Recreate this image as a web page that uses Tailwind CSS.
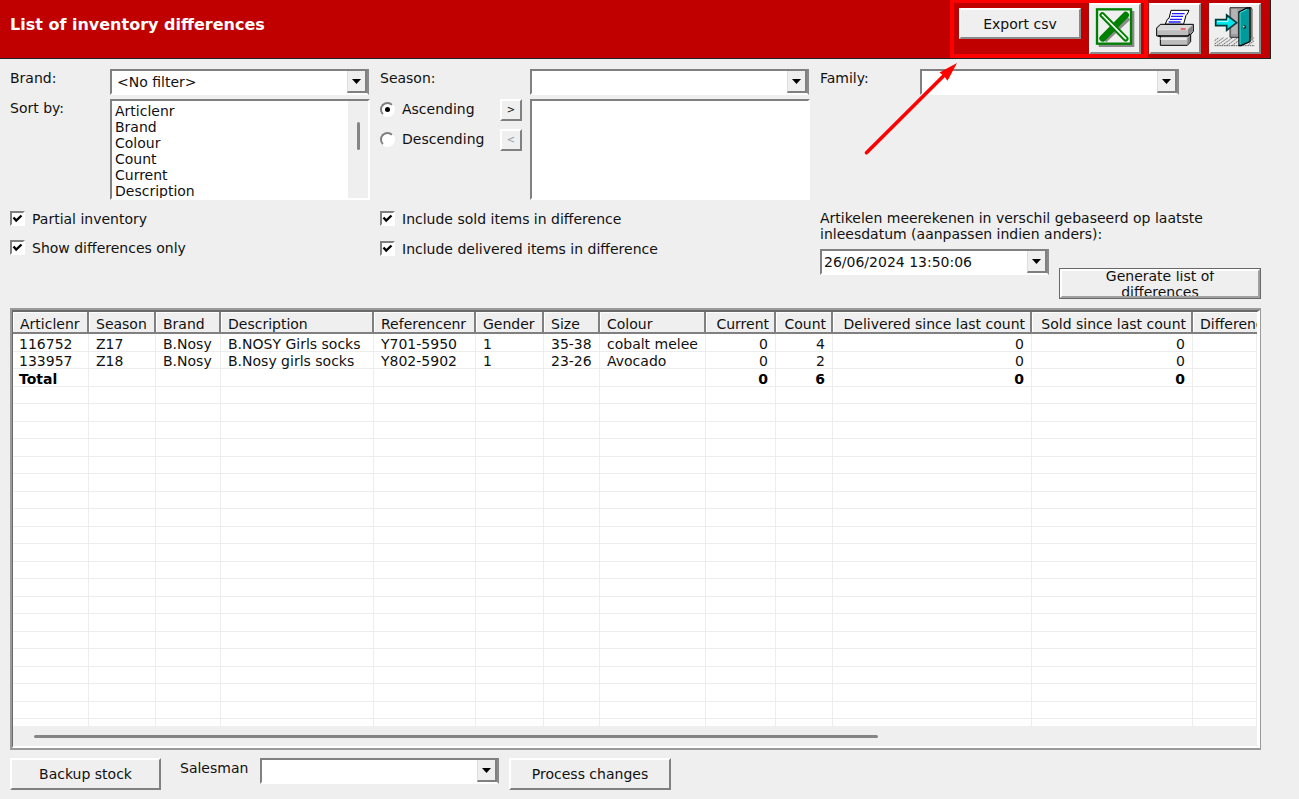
<!DOCTYPE html>
<html lang="en">
<head>
  <meta charset="UTF-8" />
  <meta name="viewport" content="width=device-width, initial-scale=1.0"/>
  <title>List of inventory differences</title>
  <script src="https://cdn.jsdelivr.net/npm/@tailwindcss/browser@4"></script>
</head>
<body class="min-h-screen overflow-x-hidden bg-[#efefef] font-['DejaVu_Sans',Verdana,sans-serif] text-[14px] leading-4 text-[#111]">

  <!-- Title bar -->
  <header class="mr-7 flex h-[59px] items-start border-r border-b border-[#222] bg-[#c00000] pr-[9px]">
    <h1 class="flex-1 pt-[17px] pl-[10px] text-[16px] leading-4 font-bold text-white">List of inventory differences</h1>

    <div class="relative mr-px flex items-start gap-2 border-4 border-t-3 border-[#ff0000] pr-[3px] pl-[5px]">
      <button type="button" class="mt-[5px] h-[31px] w-[122px] border-2 border-t-white border-l-white border-r-[#8a8a8a] border-b-[#8a8a8a] bg-[#efefef]">Export csv</button>
      <button type="button" aria-label="Export to Excel" class="h-[51px] w-[52px] border-2 border-t-white border-l-white border-r-[#8a8a8a] border-b-[#8a8a8a] bg-[#efefef]">
        <svg class="block h-[47px] w-12" viewBox="33 15 144 141">
          <path d="M56 33H163V141H56Z" fill="#8a8a8a"/>
          <rect x="51" y="28" width="102" height="103" fill="#efefef" stroke="#008000" stroke-width="7"/>
          <path d="M74 122L146 54" stroke="#8a8a8a" stroke-width="14"/>
          <path d="M68 115L137 45" stroke="#008000" stroke-width="20" stroke-linecap="round"/>
          <path d="M67 45L137 116" stroke="#008000" stroke-width="17" stroke-linecap="round"/>
          <path d="M67 45L137 116" stroke="#fff" stroke-width="5" stroke-linecap="round"/>
        </svg>
      </button>
      <!-- Pointer to the export buttons -->
      <svg class="pointer-events-none absolute top-[57px] -left-[94px] z-10 h-[100px] w-[104px]" viewBox="860 60 104 100">
        <path d="M866.5 152.7L945 74.5" stroke="#f00" stroke-width="3.6" stroke-linecap="round"/>
        <path d="M957 63L939.5 72.5L944 76L947.5 80.8Z" fill="#f00"/>
      </svg>
    </div>

    <div class="flex gap-2 pt-[3px]">
      <button type="button" aria-label="Print" class="h-[51px] w-[52px] border-2 border-t-white border-l-white border-r-[#8a8a8a] border-b-[#8a8a8a] bg-[#efefef]">
        <svg class="block h-[47px] w-12" viewBox="3 15 144 141">
          <path d="M31 73L20 84V108H31V136H112L122 125V104L130 94V73Z" fill="#bdbdbd" stroke="#000" stroke-width="3"/>
          <path d="M32 75H127L114 87H22Z" fill="#d8d8d8"/>
          <path d="M114 88L128 76V92L115 106Z" fill="#858585"/>
          <path d="M22 89H113" stroke="#f8f8f8" stroke-width="2"/>
          <path d="M24 108H114L121 101" fill="none" stroke="#000" stroke-width="4"/>
          <path d="M32 113H110V120H32Z" fill="#e8e8e8"/>
          <path d="M112 134V116L120 108V124Z" fill="#858585"/>
          <path d="M63 31H117L112 42L108 46L101 72H46L52 58L57 55Z" fill="#fff" stroke="#000" stroke-width="3"/>
          <path d="M66 41H104M63 49H99M60 58H96M56 66H92" stroke="#2020ff" stroke-width="4"/>
          <path d="M92 87H107" stroke="#f03030" stroke-width="4"/>
        </svg>
      </button>
      <button type="button" aria-label="Exit" class="h-[51px] w-[52px] border-2 border-t-white border-l-white border-r-[#8a8a8a] border-b-[#8a8a8a] bg-[#efefef]">
        <svg class="block h-[47px] w-12" viewBox="183 15 144 141">
          <path d="M194 113H313V137H194Z" fill="#e8e8e8"/>
          <path d="M194 122L206 113M194 132L220 113M200 137L234 113M215 137L248 113M230 137L262 114M246 137L272 117M296 124L312 113M296 134L313 122M194 137H314" stroke="#666" stroke-width="3" stroke-dasharray="5 2"/>
          <path d="M240 23H304V112H240Z" fill="#9c9c9c" stroke="#333" stroke-width="3"/>
          <path d="M244 27H262V102H244Z" fill="#b4b4b4"/>
          <path d="M306 26V122" stroke="#8a8a8a" stroke-width="5"/>
          <path d="M267 36L291 24H300V125L273 137H267Z" fill="#009a9a" stroke="#000" stroke-width="4"/>
          <path d="M270 38L291 28M270 38V134" fill="none" stroke="#40e0e0" stroke-width="3"/>
          <circle cx="283" cy="81" r="5" fill="#222"/>
          <circle cx="281" cy="80" r="2.5" fill="#ddd"/>
          <path d="M197 59H230V45L260 68L230 91V77H197Z" fill="#00e5ee" stroke="#003a3a" stroke-width="5"/>
          <path d="M201 64H234V54" fill="none" stroke="#c8ffff" stroke-width="3"/>
        </svg>
      </button>
    </div>
  </header>

  <main class="mr-[38px] ml-[10px] pt-[10px]">

    <!-- Filters -->
    <div class="grid grid-cols-[370px_440px_1fr]">
      <section>
        <div class="flex">
          <label for="brand" class="w-[100px] pt-px">Brand:</label>
          <div class="flex h-[26px] w-[259px] border-2 border-t-[#808080] border-l-[#808080] border-r-[#8a8a8a] border-b-white bg-white">
            <select id="brand" class="min-w-0 flex-1 appearance-none pl-[5px] outline-none"><option>&lt;No filter&gt;</option></select>
            <span class="grid w-5 place-items-center border-r-2 border-b-2 border-l border-l-[#ddd] border-r-[#808080] border-b-[#808080] bg-[#efefef]"><svg class="h-[5px] w-[9px]" viewBox="0 0 9 5"><path d="M0 0H9L4.500 5Z"/></svg></span>
          </div>
        </div>
        <div class="mt-1 flex">
          <label for="sort" class="w-[100px] pt-px">Sort by:</label>
          <div class="flex h-[101px] w-[260px] border-2 border-t-[#808080] border-l-[#808080] border-r-white border-b-white bg-[#efefef]">
            <select id="sort" multiple class="h-full min-w-0 flex-1 overflow-hidden bg-white pt-[2px] outline-none [&>option]:min-h-0 [&>option]:h-4 [&>option]:p-0 [&>option]:pl-[3px]">
              <option>Articlenr</option>
              <option>Brand</option>
              <option>Colour</option>
              <option>Count</option>
              <option>Current</option>
              <option>Description</option>
            </select>
            <div class="flex w-5 justify-center pt-[21px]"><span class="h-7 w-[3px] rounded-full bg-[#858585]"></span></div>
          </div>
        </div>
        <label class="mt-1 flex h-[29px] items-center gap-[7px]">
          <span class="grid">
            <input type="checkbox" checked class="peer size-[15px] appearance-none border-2 border-t-[#808080] border-l-[#808080] border-r-white border-b-white bg-white [grid-area:1/1]">
            <svg class="pointer-events-none hidden size-[15px] [grid-area:1/1] peer-checked:block" viewBox="0 0 15 15"><path d="M3.500 6.500L6.200 9.500L11.500 4.500" fill="none" stroke="#000" stroke-width="2.400"/></svg>
          </span>
          Partial inventory
        </label>
        <label class="flex h-[29px] items-center gap-[7px]">
          <span class="grid">
            <input type="checkbox" checked class="peer size-[15px] appearance-none border-2 border-t-[#808080] border-l-[#808080] border-r-white border-b-white bg-white [grid-area:1/1]">
            <svg class="pointer-events-none hidden size-[15px] [grid-area:1/1] peer-checked:block" viewBox="0 0 15 15"><path d="M3.500 6.500L6.200 9.500L11.500 4.500" fill="none" stroke="#000" stroke-width="2.400"/></svg>
          </span>
          Show differences only
        </label>
      </section>

      <section>
        <div class="flex">
          <label for="season" class="w-[150px] pt-px">Season:</label>
          <div class="flex h-[26px] w-[279px] border-2 border-t-[#808080] border-l-[#808080] border-r-[#8a8a8a] border-b-white bg-white">
            <select id="season" class="min-w-0 flex-1 appearance-none pl-[5px] outline-none"><option></option></select>
            <span class="grid w-5 place-items-center border-r-2 border-b-2 border-l border-l-[#ddd] border-r-[#808080] border-b-[#808080] bg-[#efefef]"><svg class="h-[5px] w-[9px]" viewBox="0 0 9 5"><path d="M0 0H9L4.500 5Z"/></svg></span>
          </div>
        </div>
        <div class="mt-1 flex">
          <div class="w-[120px]">
            <label class="flex h-5 items-center gap-[7px]">
              <span class="grid">
                <input type="radio" name="order" checked class="peer size-[15px] appearance-none rounded-full border-2 border-t-[#808080] border-l-[#808080] border-r-white border-b-white bg-white [grid-area:1/1]">
                <span class="pointer-events-none hidden size-[5px] place-self-center rounded-full bg-black [grid-area:1/1] peer-checked:block"></span>
              </span>
              Ascending
            </label>
            <label class="mt-[10px] flex h-5 items-center gap-[7px]">
              <span class="grid">
                <input type="radio" name="order" class="peer size-[15px] appearance-none rounded-full border-2 border-t-[#808080] border-l-[#808080] border-r-white border-b-white bg-white [grid-area:1/1]">
                <span class="pointer-events-none hidden size-[5px] place-self-center rounded-full bg-black [grid-area:1/1] peer-checked:block"></span>
              </span>
              Descending
            </label>
          </div>
          <div class="flex w-[30px] flex-col gap-2">
            <button type="button" class="h-[22px] w-[22px] border-2 border-t-white border-l-white border-r-[#808080] border-b-[#808080] text-[10px] leading-3">&gt;</button>
            <button type="button" disabled class="h-[22px] w-[22px] border-2 border-t-white border-l-white border-r-[#808080] border-b-[#808080] text-[10px] leading-3 text-[#999]">&lt;</button>
          </div>
          <select multiple aria-label="Selected sort fields" class="h-[101px] w-[280px] border-2 border-t-[#808080] border-l-[#808080] border-r-white border-b-white bg-white outline-none"></select>
        </div>
        <label class="mt-1 flex h-[29px] items-center gap-[7px]">
          <span class="grid">
            <input type="checkbox" checked class="peer size-[15px] appearance-none border-2 border-t-[#808080] border-l-[#808080] border-r-white border-b-white bg-white [grid-area:1/1]">
            <svg class="pointer-events-none hidden size-[15px] [grid-area:1/1] peer-checked:block" viewBox="0 0 15 15"><path d="M3.500 6.500L6.200 9.500L11.500 4.500" fill="none" stroke="#000" stroke-width="2.400"/></svg>
          </span>
          Include sold items in difference
        </label>
        <label class="flex h-[31px] items-center gap-[7px]">
          <span class="grid">
            <input type="checkbox" checked class="peer size-[15px] appearance-none border-2 border-t-[#808080] border-l-[#808080] border-r-white border-b-white bg-white [grid-area:1/1]">
            <svg class="pointer-events-none hidden size-[15px] [grid-area:1/1] peer-checked:block" viewBox="0 0 15 15"><path d="M3.500 6.500L6.200 9.500L11.500 4.500" fill="none" stroke="#000" stroke-width="2.400"/></svg>
          </span>
          Include delivered items in difference
        </label>
      </section>

      <section class="flex flex-col">
        <div class="flex">
          <label for="family" class="w-[100px] pt-px">Family:</label>
          <div class="flex h-[26px] w-[259px] border-2 border-t-[#808080] border-l-[#808080] border-r-[#8a8a8a] border-b-white bg-white">
            <select id="family" class="min-w-0 flex-1 appearance-none pl-[5px] outline-none"><option></option></select>
            <span class="grid w-5 place-items-center border-r-2 border-b-2 border-l border-l-[#ddd] border-r-[#808080] border-b-[#808080] bg-[#efefef]"><svg class="h-[5px] w-[9px]" viewBox="0 0 9 5"><path d="M0 0H9L4.500 5Z"/></svg></span>
          </div>
        </div>
        <label for="date" class="mt-[115px] block w-[420px]">Artikelen meerekenen in verschil gebaseerd op laatste inleesdatum (aanpassen indien anders):</label>
        <div class="mt-[7px] flex items-start gap-[10px]">
          <div class="flex h-[26px] w-[229px] shrink-0 border-2 border-t-[#808080] border-l-[#808080] border-r-[#8a8a8a] border-b-white bg-white">
            <input id="date" type="text" value="26/06/2024 13:50:06" class="min-w-0 flex-1 pl-[2px] outline-none">
            <button type="button" aria-label="Pick date" class="grid w-5 place-items-center border-r-2 border-b-2 border-l border-l-[#ddd] border-r-[#808080] border-b-[#808080] bg-[#efefef]"><svg class="h-[5px] w-[9px]" viewBox="0 0 9 5"><path d="M0 0H9L4.500 5Z"/></svg></button>
          </div>
          <button type="button" class="mt-[19px] h-[31px] w-[202px] border border-[#696969]">
            <span class="flex h-full items-center justify-center overflow-hidden border-2 border-t-white border-l-white border-r-[#a0a0a0] border-b-[#a0a0a0] px-5">Generate list of differences</span>
          </button>
        </div>
      </section>
    </div>

    <!-- Differences grid -->
    <div class="mt-[9px] border-t-2 border-l-2 border-r border-b-2 border-[#9a9a9a]">
      <div class="border-t-2 border-l border-r-3 border-b-2 border-t-[#696969] border-l-[#696969] border-r-white border-b-white bg-white">
        <div class="h-[414px] overflow-hidden">
          <table class="w-full table-fixed border-separate border-spacing-0 whitespace-nowrap">
            <thead>
              <tr class="h-[22px] text-left [&>th]:border-r-2 [&>th]:border-b-2 [&>th]:border-r-[#808080] [&>th]:border-b-[#808080] [&>th]:bg-[#efefef] [&>th]:p-0 [&>th]:pt-[3px] [&>th]:pr-[5px] [&>th]:pl-[7px] [&>th]:font-normal [&>th]:shadow-[inset_1px_1px_0_#fff] [&>th:last-child]:border-r-0">
                <th class="w-[76px]">Articlenr</th>
                <th class="w-[67px]">Season</th>
                <th class="w-[65px]">Brand</th>
                <th class="w-[153px]">Description</th>
                <th class="w-[102px]">Referencenr</th>
                <th class="w-[68px]">Gender</th>
                <th class="w-[56px]">Size</th>
                <th class="w-[106px]">Colour</th>
                <th class="w-[70px] text-right">Current</th>
                <th class="w-[57px] text-right">Count</th>
                <th class="w-[199px] text-right">Delivered since last count</th>
                <th class="w-[161px] text-right">Sold since last count</th>
                <th class="overflow-hidden">Differences</th>
              </tr>
            </thead>
            <tbody id="rows"></tbody>
          </table>
        </div>
        <!-- Horizontal scrollbar -->
        <div class="flex h-5 items-center bg-[#efefef] pl-[21px]"><span class="h-[3px] w-[69%] rounded-full bg-[#858585]"></span></div>
      </div>
    </div>

    <!-- Actions -->
    <div class="mt-2 flex items-start">
      <button type="button" class="h-8 w-[151px] border-2 border-t-white border-l-white border-r-[#808080] border-b-[#808080]">Backup stock</button>
      <label for="salesman" class="ml-[19px] w-20 pt-[2px]">Salesman</label>
      <div class="flex h-[26px] w-[239px] border-2 border-t-[#808080] border-l-[#808080] border-r-[#8a8a8a] border-b-white bg-white">
        <select id="salesman" class="min-w-0 flex-1 appearance-none pl-[5px] outline-none"><option></option></select>
        <span class="grid w-5 place-items-center border-r-2 border-b-2 border-l border-l-[#ddd] border-r-[#808080] border-b-[#808080] bg-[#efefef]"><svg class="h-[5px] w-[9px]" viewBox="0 0 9 5"><path d="M0 0H9L4.500 5Z"/></svg></span>
      </div>
      <button type="button" class="ml-[10px] h-8 w-[162px] border-2 border-t-white border-l-white border-r-[#808080] border-b-[#808080]">Process changes</button>
    </div>
  </main>

  <script>
    const rows = [
      ['116752', 'Z17', 'B.Nosy', 'B.NOSY Girls socks', 'Y701-5950', '1', '35-38', 'cobalt melee', '0', '4', '0', '0', ''],
      ['133957', 'Z18', 'B.Nosy', 'B.Nosy girls socks', 'Y802-5902', '1', '23-26', 'Avocado', '0', '2', '0', '0', ''],
      ['Total', '', '', '', '', '', '', '', '0', '6', '0', '0', '']
    ];
    const tableBody = document.getElementById('rows');

    // The grid lines run on below the data
    for (let i = 0; i < 23; i++) {
      const cells = rows[i] || Array(13).fill('');
      const tr = document.createElement('tr');
      tr.className = 'h-[17px] odd:h-[18px]';
      if (cells[0] === 'Total') tr.className += ' font-bold text-black';
      cells.forEach((text, c) => {
        const td = document.createElement('td');
        td.className = 'border-r border-b border-[#ededed] p-0 pt-[2px] pl-[7px] leading-[14px] first:pl-[6px]';
        if (c > 7) td.className += ' pr-[7px] text-right';
        td.textContent = text;
        tr.appendChild(td);
      });
      tableBody.appendChild(tr);
    }
  </script>
</body>
</html>
